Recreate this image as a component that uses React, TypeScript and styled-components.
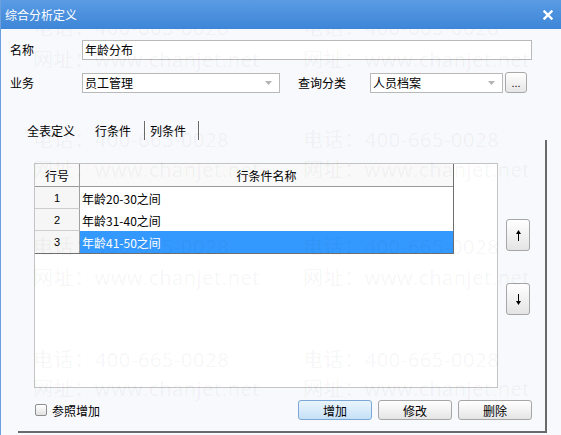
import React from "react";
import styled, { createGlobalStyle, css } from "styled-components";

const GlobalStyle = createGlobalStyle`
    body {
        margin: 0;
        font-family: "Noto Sans CJK SC", "Liberation Sans", sans-serif;
        font-size: 12px;
        color: #000;
    }
    * { box-sizing: border-box; }
`;

const Window = styled.div`
    position: relative;
    width: 561px;
    height: 435px;
    overflow: hidden;
    background: #f8f9fc;
    border-left: 1px solid #6e9fdd;
    display: flex;
    flex-direction: column;
`;

const TitleBar = styled.div`
    position: relative;
    z-index: 6;
    height: 29px;
    margin-left: -1px;
    padding: 0 8px 0 5px;
    display: flex;
    align-items: center;
    justify-content: space-between;
    background: linear-gradient(#5a9be4, #3d86d7);
    color: #fff;
    font-size: 12px;
`;

const FormArea = styled.div`
    padding-top: 10px;
    display: flex;
    flex-direction: column;
    gap: 12px;
`;

const FieldRow = styled.div`
    display: flex;
    align-items: center;
    height: 21px;
    padding-left: 9px;
`;

const Label = styled.span<{ $gap?: number }>`
    width: 72px;
    margin-left: ${(p) => p.$gap ?? 0}px;
    line-height: 20px;
`;

const TextBox = styled.div<{ $w: number }>`
    width: ${(p) => p.$w}px;
    height: 20px;
    border: 1px solid #b9b9b9;
    background: #fff;
    padding-left: 2px;
    display: flex;
    align-items: center;
    justify-content: space-between;
    padding-right: 7px;
`;

const MoreButton = styled.div`
    width: 22px;
    height: 21px;
    margin-left: 2px;
    border: 1px solid #a8a8a8;
    border-radius: 3px;
    background: linear-gradient(#ffffff, #e6e6e6);
    font-family: "Liberation Sans", sans-serif;
    font-size: 11px;
    display: flex;
    align-items: flex-end;
    justify-content: center;
    padding-bottom: 3px;
    line-height: 1;
`;

const TabStrip = styled.div`
    margin-top: 28px;
    height: 19px;
    padding-left: 26px;
    display: flex;
    align-items: center;
`;

const Tab = styled.span<{ $after: number }>`
    margin-right: ${(p) => p.$after}px;
`;

const TabSep = styled.span`
    width: 2px;
    height: 19px;
    border-left: 1px solid #6a6a6a;
    border-right: 1px solid #ffffff;
    margin-right: 4px;
`;

const Panel = styled.div`
    margin-left: 17px;
    width: 529px;
    height: 293px;
    padding: 23px 13px 0 16px;
    border-right: 2px solid #6a6a6a;
    border-bottom: 2px solid #6a6a6a;
    display: flex;
    flex-direction: column;
`;

const PanelBody = styled.div`
    display: flex;
`;

const ListBox = styled.div`
    width: 464px;
    height: 225px;
    border: 1px solid #c4c4c4;
    background: #fff;
`;

const Grid = styled.div`
    width: 419px;
    display: grid;
    grid-template-columns: 45px 1fr;
    grid-auto-rows: 22px;
    grid-template-rows: 23px;
    border-right: 1px solid #6f6f6f;
    border-bottom: 1px solid #6f6f6f;
`;

const HeadCell = styled.div<{ $first?: boolean }>`
    background: #f9f9f9;
    border-bottom: 1px solid #9a9a9a;
    ${(p) => p.$first && css`border-right: 1px solid #a0a0a0;`}
    display: flex;
    align-items: center;
    justify-content: center;
`;

const NumCell = styled.div<{ $last?: boolean }>`
    background: #f6f6f6;
    border-right: 1px solid #a0a0a0;
    border-bottom: ${(p) => (p.$last ? "none" : "1px solid #cdcdcd")};
    display: flex;
    align-items: center;
    justify-content: center;
    font-family: "Liberation Sans", "Noto Sans CJK SC", sans-serif;
    font-size: 11px;
`;

const NameCell = styled.div<{ $selected?: boolean }>`
    display: flex;
    align-items: center;
    padding-left: 2px;
    background: ${(p) => (p.$selected ? "#3399ff" : "#fff")};
    color: ${(p) => (p.$selected ? "#fff" : "#000")};
`;

const SideButtons = styled.div`
    margin-left: 8px;
    padding-top: 56px;
    display: flex;
    flex-direction: column;
    gap: 32px;
`;

const ArrowButton = styled.div`
    width: 24px;
    height: 32px;
    border: 1px solid #a6a6a6;
    border-radius: 3px;
    background: linear-gradient(#ffffff, #e4e4e4);
    display: flex;
    align-items: center;
    justify-content: center;
`;

const Footer = styled.div`
    margin-top: 12px;
    height: 20px;
    display: flex;
    align-items: center;
    padding-left: 1px;
`;

const CheckLabel = styled.label`
    display: flex;
    align-items: center;
    gap: 5px;
    flex: 1;
`;

const CheckBox = styled.span`
    width: 12px;
    height: 12px;
    border: 1px solid #8e8e8e;
    border-radius: 2px;
    background: linear-gradient(#ffffff, #e2e2e2);
`;

const ActionButtons = styled.div`
    display: flex;
    gap: 6px;
`;

const ActionButton = styled.div<{ $focused?: boolean }>`
    width: 74px;
    height: 20px;
    border-radius: 3px;
    border: 1px solid ${(p) => (p.$focused ? "#7ca8d6" : "#a6a6a6")};
    background: ${(p) =>
        p.$focused
            ? "linear-gradient(#eaf5fd, #c6e1f7)"
            : "linear-gradient(#ffffff, #e5e5e5)"};
    display: flex;
    align-items: center;
    justify-content: center;
`;

const Watermark = styled.div`
    position: absolute;
    inset: 0;
    pointer-events: none;
    z-index: 5;
`;

const Mark = styled.span`
    position: absolute;
    font-family: "Open Sans", "Noto Sans CJK SC", sans-serif;
    font-size: 20px;
    line-height: 20px;
    font-weight: 400;
    color: rgba(0, 0, 0, 0.05);
    white-space: nowrap;
    letter-spacing: 0.6px;
`;

const CloseIcon = () => (
    <svg width="10" height="10" viewBox="0 0 10 10">
        <path d="M1.5 1.5 L8.5 8.5 M8.5 1.5 L1.5 8.5" stroke="#fff" strokeWidth="2.4" strokeLinecap="square" />
    </svg>
);

const DropArrow = () => (
    <svg width="7" height="4" viewBox="0 0 7 4">
        <path d="M0 0 H7 L3.5 4 Z" fill="#b5b5b5" />
    </svg>
);

const Arrow = ({ up }: { up?: boolean }) => (
    <svg width="5" height="11" viewBox="0 0 5 11" style={up ? undefined : { transform: "rotate(180deg)" }}>
        <path d="M2.5 3 V11" stroke="#000" strokeWidth="1" />
        <path d="M0 4 L2.5 0 L5 4 Z" fill="#000" />
    </svg>
);

const rows = [
    { no: 1, name: "年龄20-30之间" },
    { no: 2, name: "年龄31-40之间" },
    { no: 3, name: "年龄41-50之间" },
];

const marks = [28, 140, 247, 360].flatMap((y, i) => {
    const webY = [60, 170, 278, 389][i];
    return [32, 302].flatMap((x) => [
        { x, y: y - 10, text: "电话：400-665-0028" },
        { x, y: webY - 10, text: "网址：www.chanjet.net" },
    ]);
});

export default function App() {
    return (
        <>
            <GlobalStyle />
            <Window>
                <TitleBar>
                    <span>综合分析定义</span>
                    <CloseIcon />
                </TitleBar>

                <FormArea>
                    <FieldRow>
                        <Label>名称</Label>
                        <TextBox $w={450}>年龄分布</TextBox>
                    </FieldRow>
                    <FieldRow>
                        <Label>业务</Label>
                        <TextBox $w={198}>
                            员工管理
                            <DropArrow />
                        </TextBox>
                        <Label $gap={18}>查询分类</Label>
                        <TextBox $w={133}>
                            人员档案
                            <DropArrow />
                        </TextBox>
                        <MoreButton>...</MoreButton>
                    </FieldRow>
                </FormArea>

                <TabStrip>
                    <Tab $after={20}>全表定义</Tab>
                    <Tab $after={13}>行条件</Tab>
                    <TabSep />
                    <Tab $after={12}>列条件</Tab>
                    <TabSep />
                </TabStrip>

                <Panel>
                    <PanelBody>
                        <ListBox>
                            <Grid>
                                <HeadCell $first>行号</HeadCell>
                                <HeadCell>行条件名称</HeadCell>
                                {rows.map((r, i) => (
                                    <React.Fragment key={r.no}>
                                        <NumCell $last={i === rows.length - 1}>{r.no}</NumCell>
                                        <NameCell $selected={i === 2}>{r.name}</NameCell>
                                    </React.Fragment>
                                ))}
                            </Grid>
                        </ListBox>
                        <SideButtons>
                            <ArrowButton><Arrow up /></ArrowButton>
                            <ArrowButton><Arrow /></ArrowButton>
                        </SideButtons>
                    </PanelBody>
                    <Footer>
                        <CheckLabel>
                            <CheckBox />
                            参照增加
                        </CheckLabel>
                        <ActionButtons>
                            <ActionButton $focused>增加</ActionButton>
                            <ActionButton>修改</ActionButton>
                            <ActionButton>删除</ActionButton>
                        </ActionButtons>
                    </Footer>
                </Panel>

                <Watermark>
                    {marks.map((m, i) => (
                        <Mark key={i} style={{ left: m.x, top: m.y }}>{m.text}</Mark>
                    ))}
                </Watermark>
            </Window>
        </>
    );
}
